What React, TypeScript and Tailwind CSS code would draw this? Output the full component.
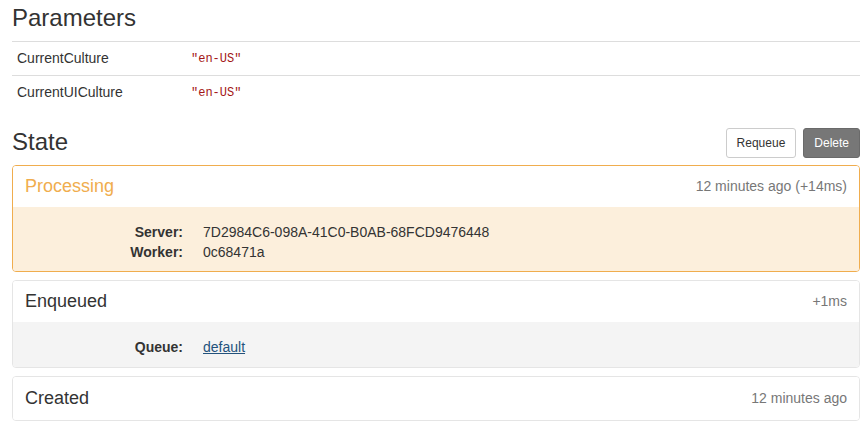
import React from 'react';

const sans = "font-['Liberation_Sans',Arial,sans-serif]";

type Row = { label: string; value: React.ReactNode };

const StateCard: React.FC<{
  title: string;
  time: string;
  rows: Row[];
  variant?: 'processing' | 'default';
}> = ({ title, time, rows, variant = 'default' }) => {
  const processing = variant === 'processing';
  return (
    <div
      className={
        'rounded border mb-[8px] overflow-hidden ' +
        (processing ? 'border-[#f0ad4e]' : 'border-[#e5e5e5]')
      }
    >
      <div
        className={
          'flex items-center justify-between px-3 bg-white ' + (rows.length > 0 ? 'h-[41px]' : 'h-[43px]')
        }
      >
        <span className={'text-[18px] ' + (processing ? 'text-[#f0ad4e]' : 'text-[#333]')}>{title}</span>
        <span className="text-[14px] text-[#777]">{time}</span>
      </div>
      {rows.length > 0 && (
        <div
          className={
            'pt-[15px] px-[10px] ' + (processing ? 'pb-[9px] bg-[#fcefdc]' : 'pb-[10px] bg-[#f4f4f4]')
          }
        >
          {rows.map((r) => (
            <div key={r.label} className="flex text-[14px] leading-[20px] text-[#333]">
              <div className="w-[160px] text-right font-bold">{r.label}</div>
              <div className="ml-[20px]">{r.value}</div>
            </div>
          ))}
        </div>
      )}
    </div>
  );
};

const App: React.FC = () => {
  const params = [
    { key: 'CurrentCulture', value: '"en-US"' },
    { key: 'CurrentUICulture', value: '"en-US"' },
  ];

  return (
    <div className={`${sans} bg-white text-[#333] px-[12px] pr-[3px] w-[863px] h-[423px] overflow-hidden`}>
      <h3 className="text-[24px] leading-[26px] pt-[5px] mb-[10px]">Parameters</h3>
      <div>
        {params.map((p) => (
          <div key={p.key} className="flex items-center h-[34px] border-t border-[#ddd] text-[14px]">
            <div className="w-[174px] pl-[5px]">{p.key}</div>
            <div className="pl-[5px] font-['Liberation_Mono',monospace] text-[12px] text-[#a31515]">{p.value}</div>
          </div>
        ))}
      </div>

      <div className="flex items-center justify-between mt-[19px] mb-[7px]">
        <h3 className="text-[24px] leading-[26px] pb-[3px]">State</h3>
        <div className="flex gap-[7px]">
          <button className="h-[30px] px-[10px] text-[12px] border border-[#ccc] rounded-[3px] bg-white text-[#333]">
            Requeue
          </button>
          <button className="h-[30px] px-[10px] text-[12px] border border-[#6a6a6a] rounded-[3px] bg-[#777] text-white">
            Delete
          </button>
        </div>
      </div>

      <StateCard
        title="Processing"
        time="12 minutes ago (+14ms)"
        variant="processing"
        rows={[
          { label: 'Server:', value: '7D2984C6-098A-41C0-B0AB-68FCD9476448' },
          { label: 'Worker:', value: '0c68471a' },
        ]}
      />
      <StateCard
        title="Enqueued"
        time="+1ms"
        rows={[
          {
            label: 'Queue:',
            value: (
              <a href="#" className="text-[#23527c] underline">
                default
              </a>
            ),
          },
        ]}
      />
      <StateCard title="Created" time="12 minutes ago" rows={[]} />
    </div>
  );
};

export default App;
